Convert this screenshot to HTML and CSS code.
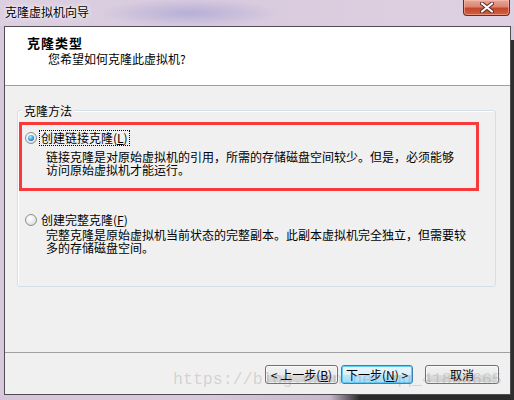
FILE: index.html
```html
<!DOCTYPE html>
<html lang="zh-CN">
<head>
<meta charset="utf-8">
<title>克隆虚拟机向导</title>
<link rel="stylesheet" href="styles.css">
</head>
<body>
<div class="screen">
  <div class="titlebar">
    <span class="title">克隆虚拟机向导</span>
    <div class="close" aria-label="关闭">
      <svg width="14" height="11" viewBox="0 0 14 11">
        <path d="M2 1.5 L12 9.5 M12 1.5 L2 9.5" stroke="#5a2a22" stroke-width="4" stroke-linecap="round"/>
        <path d="M2 1.5 L12 9.5 M12 1.5 L2 9.5" stroke="#ffffff" stroke-width="2.2" stroke-linecap="round"/>
      </svg>
    </div>
  </div>
  <div class="client">
    <div class="header">
      <div class="h-title">克隆类型</div>
      <div class="h-sub">您希望如何克隆此虚拟机?</div>
    </div>
    <div class="body">
      <div class="group">
        <span class="legend">克隆方法</span>
        <div class="option first">
          <div class="opt-row">
            <span class="radio checked"></span>
            <span class="label focus">创建链接克隆(<u>L</u>)</span>
          </div>
          <div class="desc">链接克隆是对原始虚拟机的引用，所需的存储磁盘空间较少。但是，必须能够<br>访问原始虚拟机才能运行。</div>
        </div>
        <div class="option second">
          <div class="opt-row">
            <span class="radio"></span>
            <span class="label">创建完整克隆(<u>F</u>)</span>
          </div>
          <div class="desc">完整克隆是原始虚拟机当前状态的完整副本。此副本虚拟机完全独立，但需要较<br>多的存储磁盘空间。</div>
        </div>
        <div class="highlight"></div>
      </div>
    </div>
    <div class="footer">
      <button class="btn back">&lt; 上一步(<u>B</u>)</button>
      <button class="btn next">下一步(<u>N</u>) &gt;</button>
      <button class="btn cancel">取消</button>
    </div>
    <div class="watermark">https://blog.csdn.net/qq_41803665</div>
  </div>
</div>
</body>
</html>
```

FILE: styles.css
```css
* { box-sizing: border-box; }

html, body {
  margin: 0;
  padding: 0;
}

body {
  width: 514px;
  height: 400px;
  overflow: hidden;
  font-family: "Noto Sans CJK SC", "Noto Sans", sans-serif;
  font-size: 12px;
  color: #000;
  background:
    linear-gradient(#2e2e2e, #2e2e2e) 511px 40px / 3px 360px no-repeat,
    linear-gradient(90deg, #d7c6da 0, #d9c8dc 200px, #c8b8cc 330px, #2a2a2a 360px, #2a2a2a 100%) 0 395px / 514px 5px no-repeat,
    #d9c9dc;
}

.screen {
  width: 514px;
  height: 400px;
  display: flex;
  flex-direction: column;
}

.titlebar {
  height: 26px;
  display: flex;
  align-items: flex-start;
  background:
    radial-gradient(ellipse 90px 14px at 190px 13px, rgba(120, 125, 200, 0.35), rgba(120, 125, 200, 0) 100%),
    linear-gradient(90deg, #dccfe0 0%, #d8cade 40%, #dccedf 70%, #ddd0e1 100%);
}

.title {
  padding-left: 5px;
  line-height: 24px;
  font-size: 12px;
  color: #000;
  text-shadow: 0 0 6px rgba(255, 255, 255, 0.9), 0 0 3px rgba(255, 255, 255, 0.9);
}

.close {
  margin-left: auto;
  margin-right: 4px;
  width: 47px;
  height: 16px;
  border: 1px solid #6e2a20;
  border-top: none;
  border-radius: 0 0 4px 4px;
  background: linear-gradient(#e7a797 0%, #dc8470 45%, #c6452c 55%, #d0623f 100%);
  box-shadow: inset 0 0 0 1px rgba(255, 200, 190, 0.5);
  display: flex;
  align-items: center;
  justify-content: center;
}

.client {
  position: relative;
  margin-left: 4px;
  width: 507px;
  height: 369px;
  border: 1px solid #4d4d52;
  background: #f0f0f0;
  display: flex;
  flex-direction: column;
}

.header {
  height: 59px;
  background: #ffffff;
  border-bottom: 1px solid #a0a0a0;
  padding: 8px 0 0 22px;
}

.h-title {
  font-size: 13px;
  font-weight: 700;
  letter-spacing: 1px;
  line-height: 16px;
}

.h-sub {
  margin-top: 1px;
  padding-left: 21px;
  line-height: 14px;
}

.body {
  height: 266px;
  padding: 24px 0 0 12px;
}

.group {
  position: relative;
  width: 479px;
  height: 177px;
  border: 1px solid #d5dfe5;
  border-radius: 3px;
  box-shadow: inset 1px 1px 0 #ffffff;
  padding-left: 7px;
}

.legend {
  position: absolute;
  top: -7px;
  left: 4px;
  padding: 0 2px;
  background: #f0f0f0;
  line-height: 14px;
}

.option.first { margin-top: 20px; }
.option.second { margin-top: 36px; }

.opt-row {
  display: flex;
  align-items: center;
  height: 14px;
}

.radio {
  width: 12px;
  height: 12px;
  border-radius: 50%;
  border: 1px solid #8e8f8f;
  background: radial-gradient(circle at 40% 35%, #ffffff 0%, #f0f0f0 40%, #cfcfcf 100%);
  display: flex;
  align-items: center;
  justify-content: center;
  flex: none;
}

.radio.checked::after {
  content: "";
  width: 6px;
  height: 6px;
  border-radius: 50%;
  background: radial-gradient(circle at 40% 35%, #bdf1ff 0%, #3fa6e6 45%, #0b4f92 100%);
}

.label {
  margin-left: 2px;
  padding: 0 1px;
  line-height: 14px;
  border: 1px solid transparent;
}

.label.focus {
  border: 1px dotted #000;
}

.desc {
  margin-left: 21px;
  line-height: 13.5px;
}

.option.first .desc { margin-top: 4.5px; }
.option.second .desc { margin-top: 1px; }

.highlight {
  position: absolute;
  left: 1px;
  top: 11px;
  width: 460px;
  height: 69px;
  border: 3px solid #f83a3a;
  pointer-events: none;
}

.footer {
  height: 42px;
  border-top: 1px solid #a0a0a0;
  display: flex;
  justify-content: flex-end;
  align-items: flex-start;
  padding: 12px 11px 0 0;
}

.btn {
  height: 19px;
  padding: 0;
  font-family: "Noto Sans CJK SC", "Noto Sans", sans-serif;
  font-size: 12px;
  line-height: 15px;
  color: #000;
  border: 1px solid #707070;
  border-radius: 3px;
  background: linear-gradient(#f2f2f2 0%, #ebebeb 50%, #dddddd 51%, #cfcfcf 100%);
  box-shadow: inset 0 0 0 1px rgba(255, 255, 255, 0.7);
}

.btn.back { width: 73px; }
.btn.next {
  width: 72px;
  margin-left: 3px;
  border-color: #3c7fb1;
  background: linear-gradient(#eaf6fd 0%, #d9f0fc 50%, #bee6fd 51%, #a7d9f5 100%);
  box-shadow: inset 0 0 0 1px #5fd0f8;
}
.btn.cancel {
  width: 74px;
  margin-left: 12px;
}

.watermark {
  position: absolute;
  left: 168px;
  top: 345px;
  font-family: "Liberation Mono", "DejaVu Sans Mono", monospace;
  font-size: 16.6px;
  line-height: 16px;
  color: rgba(140, 140, 140, 0.3);
  white-space: nowrap;
  pointer-events: none;
}
```
